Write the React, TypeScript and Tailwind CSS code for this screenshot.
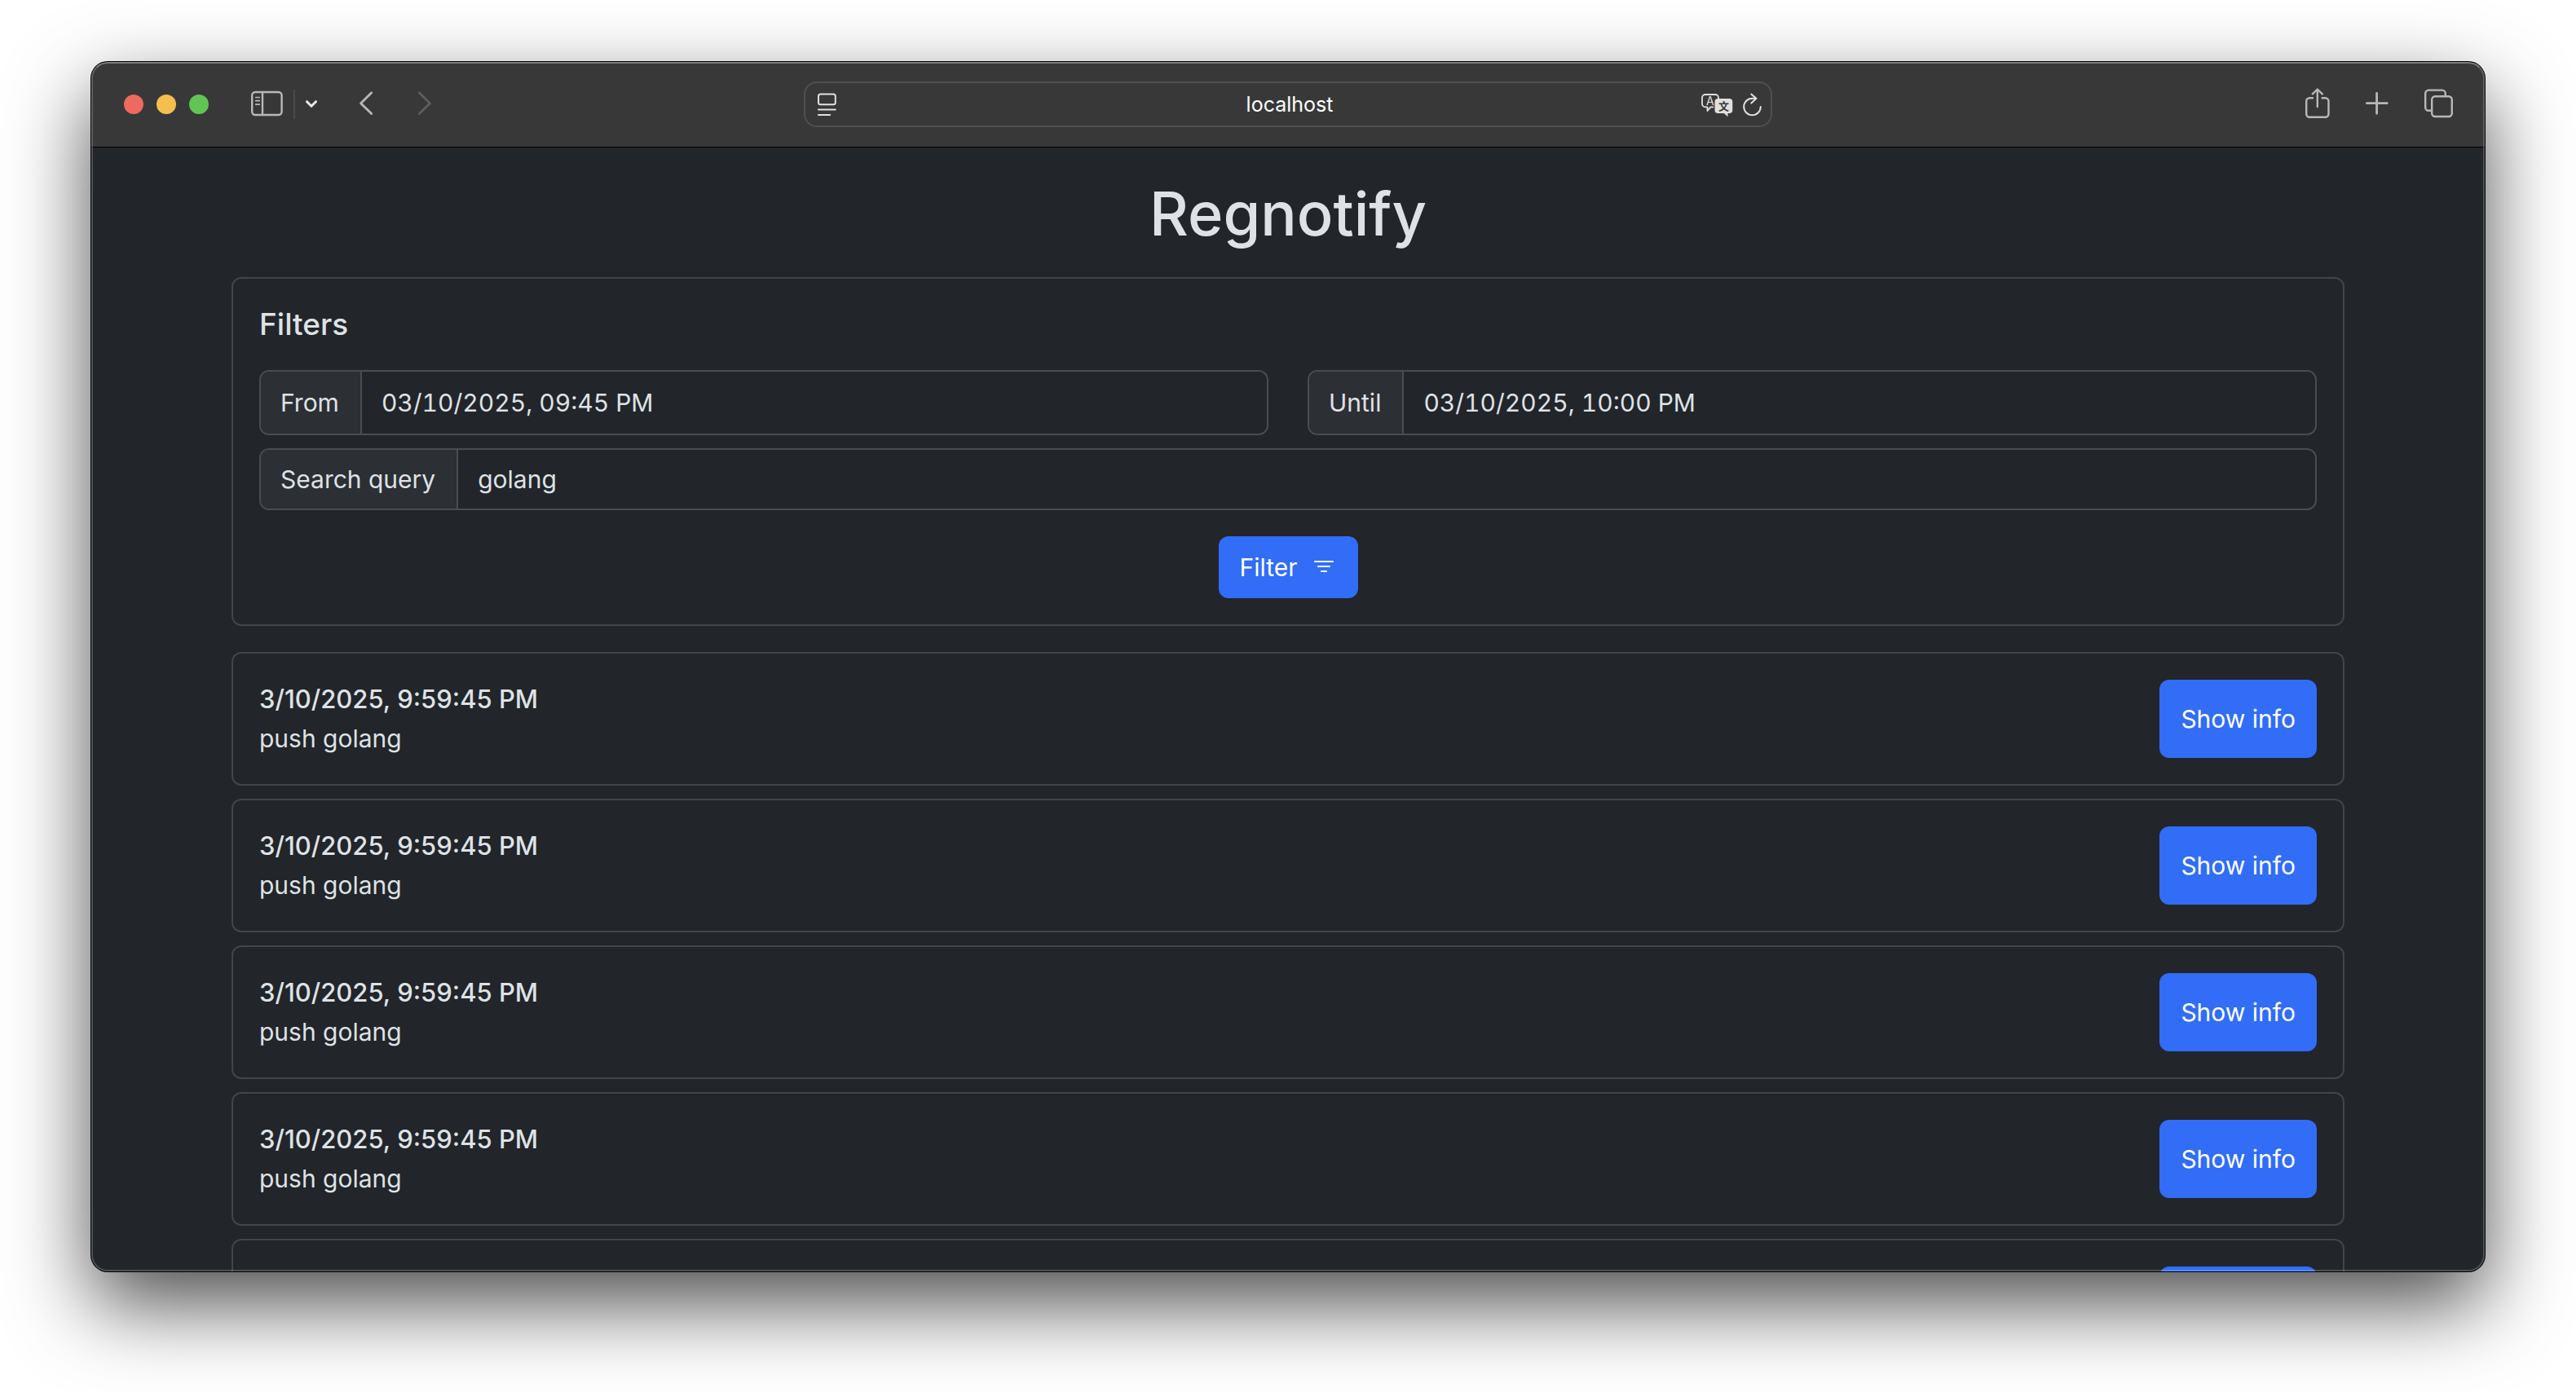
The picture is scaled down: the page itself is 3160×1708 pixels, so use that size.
import React from "react";

const entries = [
  { id: 1, time: "3/10/2025, 9:59:45 PM", text: "push golang" },
  { id: 2, time: "3/10/2025, 9:59:45 PM", text: "push golang" },
  { id: 3, time: "3/10/2025, 9:59:45 PM", text: "push golang" },
  { id: 4, time: "3/10/2025, 9:59:45 PM", text: "push golang" },
  { id: 5, time: "3/10/2025, 9:59:45 PM", text: "push golang" },
];

type IconProps = { width: number; stroke?: number; className?: string; children: React.ReactNode };

function BarIcon({ width, stroke = 2.4, className, children }: IconProps) {
  return (
    <svg
      width={width}
      height={40}
      viewBox={`0 0 ${width} 40`}
      fill="none"
      stroke="currentColor"
      strokeWidth={stroke}
      strokeLinecap="round"
      strokeLinejoin="round"
      className={className}
      aria-hidden="true"
    >
      {children}
    </svg>
  );
}

function Toolbar() {
  return (
    <header className="grid h-[105px] shrink-0 grid-cols-[1fr_minmax(0,1188px)_1fr] items-center border-b border-black bg-[#383838] text-[#b8b8b8]">
      <div className="flex items-center pl-10">
        <div className="flex gap-4">
          <button aria-label="Close" className="size-6 rounded-full bg-[#ed6a5e]" />
          <button aria-label="Minimize" className="size-6 rounded-full bg-[#f5bf4f]" />
          <button aria-label="Zoom" className="size-6 rounded-full bg-[#61c554]" />
        </div>
        <button aria-label="Sidebar" className="ml-[52px]">
          <BarIcon width={40}>
            <rect x="1.2" y="5" width="36.4" height="28" rx="4" />
            <path d="M14 5v28" />
            <path d="M5.8 11.5h4.4M5.8 15.7h4.4M5.8 20.2h4.4" strokeWidth="1.7" />
          </BarIcon>
        </button>
        <span className="ml-3 h-9 w-0.5 bg-[#4b4b4b]" />
        <button aria-label="Tab groups" className="ml-3 text-[#e8e8e8]">
          <BarIcon width={16} stroke={3}>
            <path d="M2.5 16.7 8 22.3l5.500-5.600" />
          </BarIcon>
        </button>
        <button aria-label="Back" className="ml-[50px]">
          <BarIcon width={20} stroke={2.8}>
            <path d="M15.700 5.800 2.600 18.800l13.100 12.800" />
          </BarIcon>
        </button>
        <button aria-label="Forward" className="ml-[50px] text-[#5e5e5e]">
          <BarIcon width={20} stroke={2.8}>
            <path d="M4.300 5.800l13.100 13-13.100 12.800" />
          </BarIcon>
        </button>
      </div>

      <div className="flex h-14 items-center rounded-2xl border-2 border-[#4f4f4f] pl-3.5 pr-2.5 text-[#e0e0e0]">
        <button aria-label="Reader" className="w-[76px]">
          <BarIcon width={24} stroke={2}>
            <rect x="2" y="7.500" width="20.800" height="12.700" rx="2.500" />
            <path d="M2 26.400h20.800M2 33h14.200" />
          </BarIcon>
        </button>
        <input
          aria-label="Address"
          defaultValue="localhost"
          className="min-w-0 flex-1 bg-transparent text-center text-[25px] leading-8 text-white outline-none"
        />
        <button aria-label="Translate">
          <BarIcon width={40} stroke={1.8}>
            <path d="M15.500 23.300h-3L8.500 28v-4.700H6a4 4 0 0 1-4-4V12a4 4 0 0 1 4-4h12a4 4 0 0 1 4 4v.5" />
            <path
              d="M21.500 13h13.800a4 4 0 0 1 4 4v10a4 4 0 0 1-4 4h-1.800v4.200L28.800 31h-7.300a4 4 0 0 1-4-4V17a4 4 0 0 1 4-4z"
              fill="currentColor"
              stroke="none"
            />
            <text x="11.800" y="20.800" textAnchor="middle" fontSize="14" fill="currentColor" stroke="none" className="font-[Inter]">
              A
            </text>
            <text x="28.400" y="26.800" textAnchor="middle" fontSize="13" fontWeight="700" fill="#383838" stroke="none" className="font-['Noto_Sans_CJK_SC',sans-serif]">
              文
            </text>
          </BarIcon>
        </button>
        <button aria-label="Reload" className="ml-3">
          <BarIcon width={24} stroke={2}>
            <path d="M21.800 23A10.300 10.300 0 1 1 11.500 12.700h5M10.300 7.500l6.200 5.300-6.200 5.700" />
          </BarIcon>
        </button>
      </div>

      <div className="flex items-center justify-end gap-11 pr-[38px]">
        <button aria-label="Share">
          <BarIcon width={30}>
            <path d="M10 12.200H5.200a4 4 0 0 0-4 4v15.500a4 4 0 0 0 4 4h19.300a4 4 0 0 0 4-4V16.200a4 4 0 0 0-4-4h-4.800" strokeLinecap="butt" />
            <path d="M14.800 1.800v21.300M8.800 7.300l6-5.800 6 5.800" />
          </BarIcon>
        </button>
        <button aria-label="New tab">
          <BarIcon width={28} stroke={2.8}>
            <path d="M13.600 6.300v25M1.400 18.700h24.800" />
          </BarIcon>
        </button>
        <button aria-label="Tab overview">
          <BarIcon width={36}>
            <rect x="9.200" y="10.200" width="24.600" height="24.800" rx="4" />
            <path d="M9 27.800H5.200a4 4 0 0 1-4-4V6.600a4 4 0 0 1 4-4h16.600a4 4 0 0 1 4 4V10" />
          </BarIcon>
        </button>
      </div>
    </header>
  );
}

type FieldProps = { id: string; label: string; value: string; inputClass?: string };

function Field({ id, label, value, inputClass = "" }: FieldProps) {
  return (
    <div className="flex overflow-hidden rounded-xl border-2 border-[#494c50]">
      <label htmlFor={id} className="flex items-center border-r-2 border-[#494c50] bg-[#2c2f34] pr-[26px] pl-6">
        {label}
      </label>
      <input
        id={id}
        type="text"
        defaultValue={value}
        className={`min-w-0 flex-1 bg-transparent px-6 outline-none ${inputClass}`}
      />
    </div>
  );
}

function Filters() {
  return (
    <form onSubmit={(e) => e.preventDefault()} className="rounded-xl border-2 border-[#434548] p-8">
      <h2 className="mb-8 text-[37px] leading-12 font-medium">Filters</h2>
      <div className="grid grid-cols-2 gap-x-12 gap-y-4">
        <Field id="from" label="From" value="03/10/2025, 09:45 PM" inputClass="h-[76px] tabular-nums" />
        <Field id="until" label="Until" value="03/10/2025, 10:00 PM" inputClass="h-[76px] tabular-nums" />
        <div className="col-span-2">
          <Field id="query" label="Search query" value="golang" inputClass="h-18" />
        </div>
      </div>
      <div className="mt-8 flex justify-center">
        <button type="submit" className="flex h-[76px] items-center gap-4 rounded-xl bg-[#316df6] px-[26px] text-white">
          Filter
          <svg viewBox="0 0 16 16" className="size-8" fill="none" stroke="currentColor" strokeLinecap="round" aria-hidden="true">
            <path d="M2.500 4.500h11M4.500 7.500h7M6.500 10.500h3" />
          </svg>
        </button>
      </div>
    </form>
  );
}

export default function App() {
  return (
    <div className="h-screen overflow-hidden bg-white px-28 pt-[76px] pb-[148px] font-[Inter,'Liberation_Sans',sans-serif] text-[30px] leading-12 text-[#dee2e6]">
      <div className="relative flex h-full flex-col overflow-hidden rounded-[20px] bg-[#222529] shadow-[0_0_0_1px_#000,0_40px_100px_rgba(0,0,0,0.7)]">
        <Toolbar />
        <div className="min-h-0 flex-1 overflow-y-auto [scrollbar-width:none]">
          <main className="mx-auto w-full max-w-[2640px] px-6 pt-[33px] pb-8">
            <h1 className="mb-[30px] text-center text-[74px] leading-24 font-medium">Regnotify</h1>
            <Filters />
            <ul className="mt-8 flex flex-col gap-4">
              {entries.map((entry) => (
                <li key={entry.id} className="flex justify-between rounded-xl border-2 border-[#434548] p-8">
                  <div>
                    <h3 className="text-[31px] leading-12 font-medium">{entry.time}</h3>
                    <p>{entry.text}</p>
                  </div>
                  <button className="rounded-xl bg-[#316df6] px-[26px] text-white">Show info</button>
                </li>
              ))}
            </ul>
          </main>
        </div>
        <div className="pointer-events-none absolute inset-0 rounded-[20px] border-2 border-white/20 border-t-white/35" />
      </div>
    </div>
  );
}
